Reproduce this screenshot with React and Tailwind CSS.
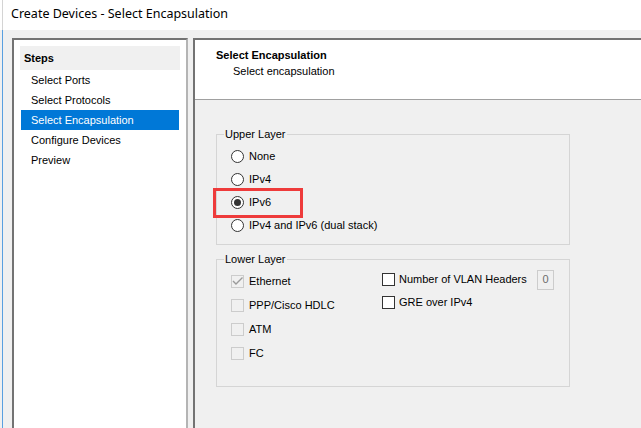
import React from 'react';

const Radio = ({ checked, label }) => (
  <div className="flex items-center h-[23px]">
    <span className="w-[13px] h-[13px] rounded-full border border-[#333333] bg-white flex items-center justify-center">
      {checked && <span className="w-[7px] h-[7px] rounded-full bg-[#333333]" />}
    </span>
    <span className="ml-[5px]">{label}</span>
  </div>
);

const Check = ({ label, disabled, checked, h = 'h-[24px]', gap = 'ml-[5px]' }) => (
  <div className={`flex items-center ${h}`}>
    <span
      className={`relative w-[13px] h-[13px] border ${
        disabled ? 'border-[#cccccc] bg-[#f0f0f0]' : 'border-[#333333] bg-white'
      }`}
    >
      {checked && (
        <svg className="absolute -left-px -top-px" width="13" height="13" viewBox="0 0 13 13">
          <polyline points="2,6 5,9 11.5,2.5" fill="none" stroke="#9a9a9a" strokeWidth="1.4" />
        </svg>
      )}
    </span>
    <span className={gap}>{label}</span>
  </div>
);

const steps = ['Select Ports', 'Select Protocols', 'Select Encapsulation', 'Configure Devices', 'Preview'];

export default function App() {
  return (
    <div className="w-[641px] h-[428px] overflow-hidden flex flex-col bg-[#f0f0f0] text-black text-[11px] font-['Liberation_Sans',Arial,sans-serif]">
      {/* title bar */}
      <div className="h-[30px] bg-white pl-[2px] shrink-0">
        <div className="h-full border-l border-[#d4d4d4] pl-[8px] pb-[2px] flex items-center text-[12.5px] font-['Noto_Sans',sans-serif]">
          Create Devices - Select Encapsulation
        </div>
      </div>

      {/* body */}
      <div className="flex-1 min-h-0 pl-[2px]">
        <div className="h-full border-l border-[#5aa0e0] pl-[9px] pt-[8px] flex gap-[5px]">
          {/* steps panel */}
          <div className="w-[176px] shrink-0 bg-white border-l-2 border-t-2 border-r-2 border-l-[#737373] border-t-[#737373] border-r-[#b4b4b4] pt-[6px]">
            <div className="ml-[6px] w-[160px] h-[24px] bg-[#f0f0f0] pl-[4px] flex items-center font-bold">
              Steps
            </div>
            <div className="ml-[7px] w-[158px]">
              {steps.map((s) => (
                <div
                  key={s}
                  className={`h-[20px] pl-[10px] flex items-center ${
                    s === 'Select Encapsulation' ? 'bg-[#0078d7] text-white' : ''
                  }`}
                >
                  {s}
                </div>
              ))}
            </div>
          </div>

          {/* content panel */}
          <div className="flex-1 min-w-0 overflow-hidden border-l-2 border-t-2 border-r-0 border-l-[#737373] border-t-[#737373] flex flex-col">
            <div className="h-[60px] shrink-0 bg-white border-b border-[#a0a0a0] pl-[21px] pt-[7px] leading-[16px]">
              <div className="font-bold">Select Encapsulation</div>
              <div className="pl-[17px]">Select encapsulation</div>
            </div>

            <div className="pl-[21px] pt-[34px]">
              {/* Upper layer */}
              <div className="relative w-[354px] h-[111px] border border-[#d5d5d5] pt-[10px] pl-[14px]">
                <span className="absolute top-[-7px] left-[7px] px-px leading-[13px] bg-[#f0f0f0]">Upper Layer</span>
                <Radio label="None" />
                <Radio label="IPv4" />
                <Radio label="IPv6" checked />
                <Radio label="IPv4 and IPv6 (dual stack)" />
                <div className="absolute left-[-4px] top-[53px] w-[90px] h-[30px] border-[3px] border-[#ee3b3b]" />
              </div>

              {/* Lower layer */}
              <div className="relative mt-[14px] w-[354px] h-[128px] border border-[#d5d5d5] pl-[14px] flex">
                <span className="absolute top-[-7px] left-[7px] px-px leading-[13px] bg-[#f0f0f0]">Lower Layer</span>
                <div className="w-[151px] pt-[9px]">
                  <Check label="Ethernet" disabled checked />
                  <Check label="PPP/Cisco HDLC" disabled />
                  <Check label="ATM" disabled />
                  <Check label="FC" disabled />
                </div>
                <div className="pt-[8px]">
                  <div className="flex items-center h-[23px]">
                    <span className="w-[13px] h-[13px] border border-[#333333] bg-white" />
                    <span className="ml-[4px] w-[138px]">Number of VLAN Headers</span>
                    <span className="w-[17px] h-[20px] border border-[#cccccc] bg-[#f0f0f0] flex items-center justify-center text-[#6d6d6d]">
                      0
                    </span>
                  </div>
                  <Check label="GRE over IPv4" h="h-[23px]" gap="ml-[4px]" />
                </div>
              </div>
            </div>
          </div>
        </div>
      </div>
    </div>
  );
}
